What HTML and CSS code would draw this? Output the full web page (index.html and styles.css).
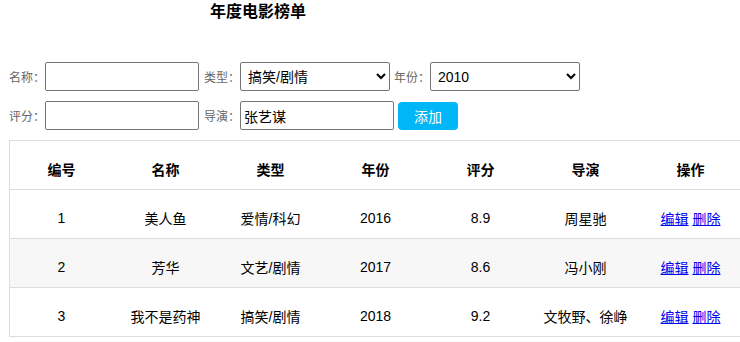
FILE: index.html
```html
<!DOCTYPE html>
<html lang="zh-CN">
<head>
    <meta charset="UTF-8">
    <meta name="viewport" content="width=device-width, initial-scale=1.0">
    <title>年度电影榜单</title>
    <link rel="stylesheet" href="styles.css">
</head>
<body>
    <div class="title">年度电影榜单</div>

    <div class="form">
        <div class="form-row">
            <label class="label">名称：</label>
            <input class="field" type="text">
            <label class="label">类型：</label>
            <select class="field select">
                <option>搞笑/剧情</option>
                <option>爱情/科幻</option>
                <option>文艺/剧情</option>
            </select>
            <label class="label">年份：</label>
            <select class="field select">
                <option>2010</option>
                <option>2016</option>
                <option>2017</option>
                <option>2018</option>
            </select>
        </div>
        <div class="form-row">
            <label class="label">评分：</label>
            <input class="field" type="text">
            <label class="label">导演：</label>
            <input class="field" type="text" value="张艺谋">
            <button class="btn-add">添加</button>
        </div>
    </div>

    <table class="movies">
        <thead>
            <tr>
                <th class="col-id">编号</th>
                <th>名称</th>
                <th>类型</th>
                <th>年份</th>
                <th>评分</th>
                <th>导演</th>
                <th>操作</th>
            </tr>
        </thead>
        <tbody>
            <tr>
                <td>1</td>
                <td>美人鱼</td>
                <td>爱情/科幻</td>
                <td>2016</td>
                <td>8.9</td>
                <td>周星驰</td>
                <td><a href="#">编辑</a> <a href="#">删除</a></td>
            </tr>
            <tr>
                <td>2</td>
                <td>芳华</td>
                <td>文艺/剧情</td>
                <td>2017</td>
                <td>8.6</td>
                <td>冯小刚</td>
                <td><a href="#">编辑</a> <a href="#">删除</a></td>
            </tr>
            <tr>
                <td>3</td>
                <td>我不是药神</td>
                <td>搞笑/剧情</td>
                <td>2018</td>
                <td>9.2</td>
                <td>文牧野、徐峥</td>
                <td><a href="#">编辑</a> <a href="#">删除</a></td>
            </tr>
        </tbody>
    </table>
</body>
</html>
```

FILE: styles.css
```css
html {
    overflow: hidden;
}

body {
    margin: 0;
    padding: 0 8px 8px;
    font-family: "Liberation Sans", "Noto Sans CJK SC", sans-serif;
    font-size: 14px;
    color: #000;
    background: #fff;
}

.title {
    width: 500px;
    text-align: center;
    font-size: 16px;
    font-weight: bold;
    line-height: 24px;
}

.form {
    margin-top: 38px;
}

.form-row {
    display: flex;
    align-items: center;
    margin-bottom: 10px;
    padding-left: 1px;
}

.label {
    width: 36px;
    font-size: 12px;
    color: #666;
}

.field {
    box-sizing: border-box;
    width: 154px;
    height: 29px;
    margin-right: 5px;
    padding: 1px 3px;
    border: 1px solid #767676;
    border-radius: 2px;
    font-family: "Liberation Sans", "Noto Sans CJK SC", sans-serif;
    font-size: 14px;
    color: #000;
    background: #fff;
}

.select {
    width: 150px;
    margin-right: 4px;
}

.btn-add {
    width: 60px;
    height: 28px;
    margin-left: -1px;
    border: none;
    border-radius: 4px;
    background: #00b6f6;
    color: #fff;
    font-family: "Noto Sans CJK SC", sans-serif;
    font-size: 14px;
}

.movies {
    margin-top: 3px;
    margin-left: 1px;
    width: 733px;
    border-collapse: collapse;
    table-layout: fixed;
}

.movies th,
.movies td {
    width: 105px;
    height: 40px;
    padding: 8px 0 0;
    border-top: 1px solid #ddd;
    border-bottom: 1px solid #ddd;
    text-align: center;
}

.movies th:first-child,
.movies td:first-child {
    border-left: 1px solid #ddd;
}

.movies .col-id {
    width: 103px;
}

.movies th {
    font-weight: bold;
}

.movies tbody tr:nth-child(2) {
    background: #f7f7f7;
}

.movies a {
    color: #00e;
}
```
